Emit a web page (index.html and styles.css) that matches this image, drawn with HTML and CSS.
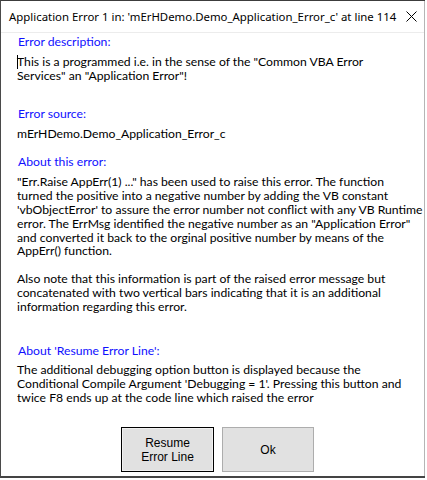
FILE: index.html
```html
<!DOCTYPE html>
<html>
<head>
<meta charset="utf-8">
<link rel="stylesheet" href="styles.css">
</head>
<body>
<div class="window">
  <div class="titlebar">
    <span class="title">Application Error 1 in: 'mErHDemo.Demo_Application_Error_c' at line 114</span>
    <svg class="close" width="11" height="11" viewBox="0 0 11 11"><path d="M0.5 0.5 L10.5 10.5 M10.5 0.5 L0.5 10.5" stroke="#000" stroke-width="1" fill="none"/></svg>
  </div>
  <div class="content">
    <div class="label l1">Error description:</div>
    <div class="text t1"><span class="caret"></span>This is a programmed i.e. in the sense of the "Common VBA Error<br>Services" an "Application Error"!</div>
    <div class="label l2">Error source:</div>
    <div class="text t2">mErHDemo.Demo_Application_Error_c</div>
    <div class="label l3">About this error:</div>
    <div class="text t3">"Err.Raise AppErr(1) ..." has been used to raise this error. The function<br>turned the positive into a negative number by adding the VB constant<br>'vbObjectError' to assure the error number not conflict with any VB Runtime<br>error. The ErrMsg identified the negative number as an "Application Error"<br>and converted it back to the orginal positive number by means of the<br>AppErr() function.<br><br>Also note that this information is part of the raised error message but<br>concatenated with two vertical bars indicating that it is an additional<br>information regarding this error.</div>
    <div class="label l4">About 'Resume Error Line':</div>
    <div class="text t4">The additional debugging option button is displayed because the<br>Conditional Compile Argument 'Debugging = 1'. Pressing this button and<br>twice F8 ends up at the code line which raised the error</div>
  </div>
  <div class="buttons">
    <div class="btn default">Resume<br>Error Line</div>
    <div class="btn">Ok</div>
  </div>
</div>
</body>
</html>
```
FILE: styles.css
```css
html, body {
  margin: 0;
  padding: 0;
  background: #ffffff;
}
body {
  width: 427px;
  height: 480px;
  overflow: hidden;
}
.window {
  box-sizing: border-box;
  width: 425px;
  height: 478px;
  border-top: 1px solid #3c3c3c;
  border-left: 1px solid #4a4a4a;
  border-bottom: 2px solid #444;
  display: flex;
  flex-direction: column;
  background: #fff;
  position: relative;
}
.window::after {
  content: "";
  position: absolute;
  top: 0;
  right: 0;
  bottom: 0;
  border-right: 1px solid #b5b5b5;
}
.titlebar {
  height: 31px;
  border-bottom: 1px solid #ececec;
  display: flex;
  align-items: center;
  padding-left: 8px;
  padding-right: 8px;
  font-family: "Noto Sans", sans-serif;
  font-size: 11.4px;
  color: #000;
}
.title {
  flex: 1;
  white-space: nowrap;
}
.close {
  margin-top: 0px;
}
.content {
  display: flex;
  flex-direction: column;
  padding-left: 16px;
  font-family: Lato, "Open Sans", sans-serif;
  font-size: 12.2px;
}
.label {
  color: #1010ff;
  line-height: 14px;
  padding-left: 1px;
  white-space: nowrap;
}
.text {
  color: #000;
  line-height: 13.8px;
  white-space: nowrap;
  position: relative;
}
.caret {
  position: absolute;
  left: 0;
  top: 0;
  width: 1px;
  height: 14px;
  background: #000;
}
.l1 { margin-top: 2px; }
.t1 { margin-top: 6px; }
.l2 { margin-top: 24px; }
.t2 { margin-top: 6px; }
.l3 { margin-top: 15px; }
.t3 { margin-top: 6px; }
.l4 { margin-top: 31px; }
.t4 { margin-top: 5px; }
.buttons {
  margin-top: auto;
  margin-bottom: 4px;
  display: flex;
  gap: 8px;
  padding-left: 120px;
}
.btn {
  box-sizing: border-box;
  width: 92px;
  height: 45px;
  background: #e1e1e1;
  border: 1px solid #adadad;
  display: flex;
  align-items: center;
  justify-content: center;
  text-align: center;
  font-family: "Liberation Sans", sans-serif;
  font-size: 12px;
  line-height: 14px;
  color: #000;
}
.btn.default {
  width: 93px;
  border: 1px solid #000;
  box-shadow: inset 0 0 0 1px #f0f0f0;
}
```
